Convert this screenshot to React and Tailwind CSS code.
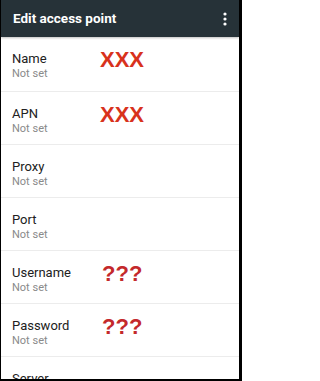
import React from "react";

const rows = [
  { label: "Name", mark: "XXX" },
  { label: "APN", mark: "XXX" },
  { label: "Proxy" },
  { label: "Port" },
  { label: "Username", mark: "???" },
  { label: "Password", mark: "???" },
  { label: "Server" },
];

export default function App() {
  return (
    <div
      className="w-[242px] h-[381px] overflow-hidden bg-white border-l border-r-[3px] border-b-[2px] border-black flex flex-col"
      style={{ fontFamily: "Roboto, 'Noto Sans', sans-serif" }}
    >
      <div className="h-[37px] shrink-0 bg-[#263238] flex items-center justify-between pl-[12px] pr-[10px] shadow-[0_1px_2px_rgba(0,0,0,0.25)] relative z-10">
        <span className="text-white text-[13.5px] font-bold">Edit access point</span>
        <svg width="4" height="14" viewBox="0 0 4 14" className="mr-[2px]">
          <circle cx="2" cy="2" r="1.6" fill="#fff" />
          <circle cx="2" cy="7" r="1.6" fill="#fff" />
          <circle cx="2" cy="12" r="1.6" fill="#fff" />
        </svg>
      </div>
      {rows.map((r, i) => (
        <div
          key={r.label}
          className={`${i === 0 ? "h-[55px]" : "h-[53px]"} shrink-0 flex items-start pt-[12px] pl-[11px] border-b border-[#ececec]`}
        >
          <div className="w-[88px] pt-[2px] flex flex-col">
            <span className="text-[13px] leading-4 text-[#212121]">{r.label}</span>
            <span className="text-[11px] leading-[14px] text-[#8a8a8a]">Not set</span>
          </div>
          {r.mark && (
            <span
              className={`text-[22px] leading-none font-bold ${r.mark === "XXX" ? "text-[#d8321c]" : "text-[#c4292b] ml-[2px]"}`}
              style={{ fontFamily: "'Liberation Sans', Arial, sans-serif" }}
            >
              {r.mark}
            </span>
          )}
        </div>
      ))}
    </div>
  );
}
